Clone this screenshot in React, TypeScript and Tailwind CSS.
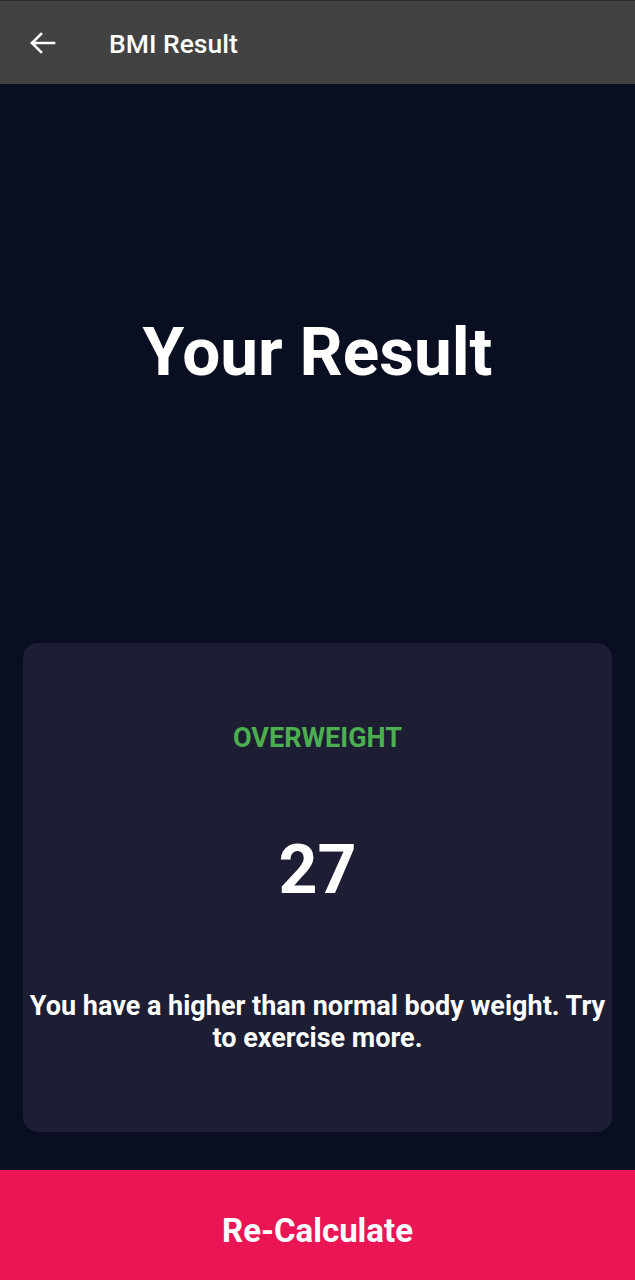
import React from "react";

export default function App() {
  return (
    <div
      className="flex flex-col h-[1280px] w-full bg-[#0A0E21] overflow-hidden"
      style={{ fontFamily: "Roboto, 'Liberation Sans', sans-serif" }}
    >
      <header className="h-[84px] bg-[#424242] flex items-center shrink-0 border-t border-[#2f2f2f]">
        <div className="w-[109px] flex items-center pl-[29px]">
          <svg width="27" height="24" viewBox="0 0 27 24" fill="none">
            <path
              d="M25 12H3M12 3L3 12L12 21"
              stroke="white"
              strokeWidth="2.6"
              strokeLinecap="square"
              strokeLinejoin="miter"
            />
          </svg>
        </div>
        <span className="text-white text-[26.5px] font-medium pt-[2px]">BMI Result</span>
      </header>

      <div className="h-[536px] flex items-center justify-center shrink-0">
        <h1 className="text-white text-[67.5px] font-bold leading-none">Your Result</h1>
      </div>

      <div className="mx-[23px] mt-[23px] h-[489px] rounded-[15px] bg-[#1D1E33] flex flex-col items-center shrink-0 px-[3px]">
        <div className="mt-[79px] h-[32px] leading-[32px] text-[27px] font-bold text-[#4CAF50]">
          OVERWEIGHT
        </div>
        <div className="mt-[76px] h-[80px] leading-[80px] text-[68px] font-bold text-white">
          27
        </div>
        <p className="mt-[80px] text-center text-white text-[27px] font-bold leading-[32px]">
          You have a higher than normal body weight. Try to exercise more.
        </p>
      </div>

      <div className="flex-1" />

      <button className="h-[110px] w-full bg-[#EB1555] text-white text-[33px] font-bold shrink-0 flex items-center justify-center pt-[12px]">
        Re-Calculate
      </button>
    </div>
  );
}
